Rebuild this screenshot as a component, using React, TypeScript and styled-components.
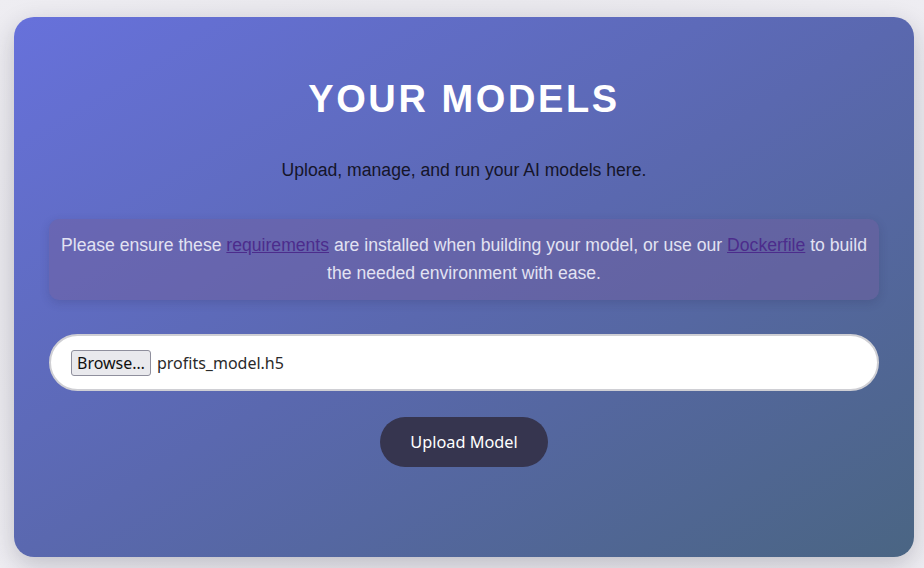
import React from "react";
import styled, { createGlobalStyle } from "styled-components";

const Global = createGlobalStyle`
  html, body { margin: 0; padding: 0; }
  body {
    background: #e8e7ec;
    font-family: "Liberation Sans", Arial, sans-serif;
    width: 924px;
    height: 568px;
    overflow: hidden;
  }
`;

const Page = styled.div`
  box-sizing: border-box;
  width: 924px;
  height: 568px;
  padding: 17px 10px 11px 14px;
  background: radial-gradient(ellipse at center, #dcdbe1 0%, #e9e8ed 70%, #eeedf2 100%);
`;

const Card = styled.main`
  box-sizing: border-box;
  width: 900px;
  height: 540px;
  border-radius: 20px;
  padding: 58px 35px 0;
  background: linear-gradient(to bottom right, #6771db 0%, #5a68af 50%, #4a6583 100%);
  box-shadow: 0 8px 24px rgba(40, 40, 60, 0.22);
  display: flex;
  flex-direction: column;
  align-items: center;
`;

const Title = styled.h1`
  margin: 0;
  font-family: "Liberation Sans", Arial, sans-serif;
  font-size: 38px;
  line-height: 48px;
  font-weight: 700;
  letter-spacing: 2.6px;
  color: #ffffff;
  text-align: center;
`;

const Subtitle = styled.p`
  margin: 35px 0 0;
  font-size: 17.6px;
  line-height: 24px;
  color: #15152a;
  text-align: center;
`;

const Note = styled.div`
  box-sizing: border-box;
  margin-top: 37px;
  width: 830px;
  padding: 12px 6px 13px;
  border-radius: 10px;
  background: rgba(112, 96, 160, 0.5);
  box-shadow: 0 3px 10px rgba(40, 40, 80, 0.18);
  font-size: 17.6px;
  line-height: 28px;
  color: #e2e2f2;
  text-align: center;
`;

const NoteLink = styled.a`
  color: #4c2c8c;
  text-decoration: underline;
`;

const FileBox = styled.label`
  box-sizing: border-box;
  margin-top: 34px;
  width: 830px;
  height: 57px;
  border: 2px solid #cfcfd4;
  border-radius: 29px;
  background: #ffffff;
  display: flex;
  align-items: center;
  padding-left: 20px;
  gap: 6px;
  font-family: "Noto Sans", "Open Sans", sans-serif;
  font-size: 16px;
  color: #222;
`;

const BrowseButton = styled.span`
  box-sizing: border-box;
  height: 26px;
  padding: 0 5px;
  border: 1px solid #8f8f9d;
  border-radius: 3px;
  background: #e9e9ed;
  color: #111;
  display: inline-flex;
  align-items: center;
  font-family: "Noto Sans", "Open Sans", sans-serif;
  font-size: 16px;
`;

const FileName = styled.span`
  color: #2a2a2a;
`;

const UploadButton = styled.button`
  margin-top: 26px;
  width: 168px;
  height: 50px;
  border: none;
  border-radius: 25px;
  background: #36354f;
  color: #ffffff;
  font-family: "Noto Sans", "Open Sans", sans-serif;
  font-size: 16.3px;
  cursor: pointer;
`;

export default function App() {
  return (
    <>
      <Global />
      <Page>
        <Card>
          <Title>YOUR MODELS</Title>
          <Subtitle>Upload, manage, and run your AI models here.</Subtitle>
          <Note>
            Please ensure these <NoteLink href="#">requirements</NoteLink> are installed when building your model, or use our{" "}
            <NoteLink href="#">Dockerfile</NoteLink> to build the needed environment with ease.
          </Note>
          <FileBox>
            <BrowseButton>Browse…</BrowseButton>
            <FileName>profits_model.h5</FileName>
          </FileBox>
          <UploadButton>Upload Model</UploadButton>
        </Card>
      </Page>
    </>
  );
}
